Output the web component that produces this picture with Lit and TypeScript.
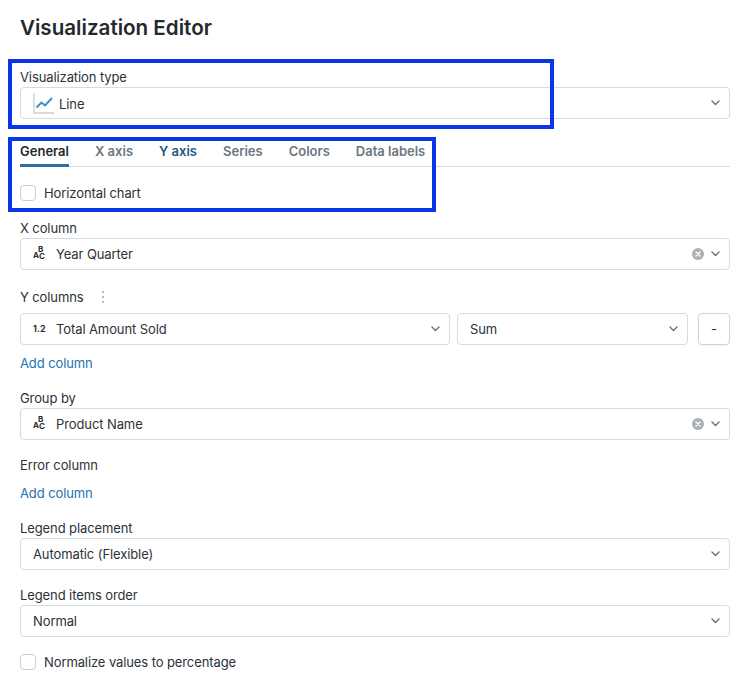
import { LitElement, html, css } from "lit";
import { customElement } from "lit/decorators.js";

const chevron = html`<svg class="chev" width="9" height="6" viewBox="0 0 9 6" fill="none"><path d="M1 1l3.5 3.4L8 1" stroke="#5f7281" stroke-width="1.4" stroke-linecap="round" stroke-linejoin="round"/></svg>`;
const clear = html`<svg class="clear" width="12" height="12" viewBox="0 0 12 12"><circle cx="6" cy="6" r="6" fill="#a9b0b6"/><path d="M4 4l4 4M8 4l-4 4" stroke="#fff" stroke-width="1.4" stroke-linecap="round"/></svg>`;
const lineIcon = html`<svg class="ico-line" width="22" height="22" viewBox="0 0 22 22" fill="none"><path d="M1 1v20h20" stroke="#c9ced3" stroke-width="1.4"/><path d="M3.5 15.5l5-5 3.5 3 7-7.5" stroke="#3f8fc4" stroke-width="1.9" stroke-linejoin="round"/></svg>`;
const abc = html`<span class="type abc"><span class="a">A</span><span class="b">B</span><span class="c">C</span></span>`;
const num = html`<span class="type num">1.2</span>`;

@customElement("app-root")
export class AppRoot extends LitElement {
  static styles = css`
    :host { display: block; position: relative; height: 686px; overflow: hidden; background: #fff; padding: 0 9px 0 20px; box-sizing: border-box; font: 13px/20px Inter, "Liberation Sans", sans-serif; letter-spacing: -0.1px; color: #2b3238; }
    h1 { margin: 0; padding-top: 14px; height: 53px; box-sizing: border-box; font-size: 20.6px; line-height: 27px; font-weight: 600; color: #24292e; letter-spacing: 0; }
    .lbl { height: 20px; display: flex; align-items: center; gap: 18px; }
    .select { height: 32px; box-sizing: border-box; border: 1px solid #d6dbdf; border-radius: 4px; display: flex; align-items: center; padding: 0 9px 0 12px; background: #fff; }
    .val { flex: 1; white-space: nowrap; display: flex; align-items: center; }
    .val.chart { padding-top: 1px; }
    .clear { margin-right: 7px; }
    .chev { flex: none; }
    .ico-line { margin-right: 4px; margin-top: -1px; }
    .type { width: 16px; margin-right: 7px; flex: none; position: relative; height: 14px; color: #2b3238; font-weight: 700; }
    .abc span { position: absolute; font-size: 8px; line-height: 7px; letter-spacing: 0; }
    .abc .a { left: 0; top: 5px; }
    .abc .b { left: 5px; top: -1px; }
    .abc .c { left: 6px; top: 6px; }
    .num { font-size: 9px; line-height: 14px; letter-spacing: 0; }
    .tabs { margin-top: 13px; height: 34px; border-bottom: 1px solid #d6dbdf; display: flex; gap: 26px; }
    .tab { height: 34px; box-sizing: border-box; padding-top: 9px; font-weight: 600; color: #6b7680; white-space: nowrap; letter-spacing: 0; }
    .tab.active { color: #24292e; border-bottom: 3px solid #2a6fa3; height: 35px; }
    .tab.y { color: #1f5785; }
    .check { display: flex; align-items: center; gap: 8px; height: 20px; }
    .box { width: 16px; height: 16px; box-sizing: border-box; border: 1px solid #c9ced3; border-radius: 4px; background: #fff; }
    .mt-h { margin-top: 16px; }
    .mt-15 { margin-top: 15px; }
    .mt-y { margin-top: 17px; }
    .row { display: flex; margin-top: 6px; }
    .grow { width: 430px; margin-right: 7px; }
    .agg { width: 231px; margin-right: 10px; }
    .minus { width: 32px; height: 32px; box-sizing: border-box; border: 1px solid #cfd4d8; border-radius: 4px; display: flex; align-items: center; justify-content: center; box-shadow: 0 1px 1px rgba(0,0,0,.06); color: #333; }
    .add { color: #2272b4; margin-top: 8px; height: 20px; }
    .kebab { display: inline-flex; flex-direction: column; gap: 3px; }
    .kebab i { width: 2px; height: 2px; background: #b4bac0; display: block; }
    .mark { position: absolute; border: 4px solid #0a36e8; box-sizing: border-box; pointer-events: none; }
    .m1 { left: 8px; top: 59px; width: 546px; height: 70px; }
    .m2 { left: 8px; top: 137px; width: 428px; height: 75px; }
  `;

  private sel(content: unknown, hasClear = false) {
    return html`<div class="select"><span class="val">${content}</span>${hasClear ? clear : ""}${chevron}</div>`;
  }

  render() {
    return html`
      <h1>Visualization Editor</h1>
      <div class="lbl" style="margin-top:14px">Visualization type</div>
      <div class="select"><span class="val chart">${lineIcon}Line</span>${chevron}</div>
      <div class="tabs">
        <div class="tab active">General</div>
        <div class="tab">X axis</div>
        <div class="tab y">Y axis</div>
        <div class="tab">Series</div>
        <div class="tab">Colors</div>
        <div class="tab">Data labels</div>
      </div>
      <div class="check mt-h"><span class="box"></span>Horizontal chart</div>
      <div class="lbl mt-15">X column</div>
      ${this.sel(html`${abc}Year Quarter`, true)}
      <div class="lbl mt-y">Y columns <span class="kebab"><i></i><i></i><i></i></span></div>
      <div class="row">
        <div class="grow">${this.sel(html`${num}Total Amount Sold`)}</div>
        <div class="agg">${this.sel("Sum")}</div>
        <div class="minus">-</div>
      </div>
      <div class="add">Add column</div>
      <div class="lbl mt-15">Group by</div>
      ${this.sel(html`${abc}Product Name`, true)}
      <div class="lbl mt-15">Error column</div>
      <div class="add">Add column</div>
      <div class="lbl mt-15">Legend placement</div>
      ${this.sel("Automatic (Flexible)")}
      <div class="lbl mt-15">Legend items order</div>
      ${this.sel("Normal")}
      <div class="check mt-15"><span class="box"></span>Normalize values to percentage</div>
      <div class="mark m1"></div>
      <div class="mark m2"></div>
    `;
  }
}
